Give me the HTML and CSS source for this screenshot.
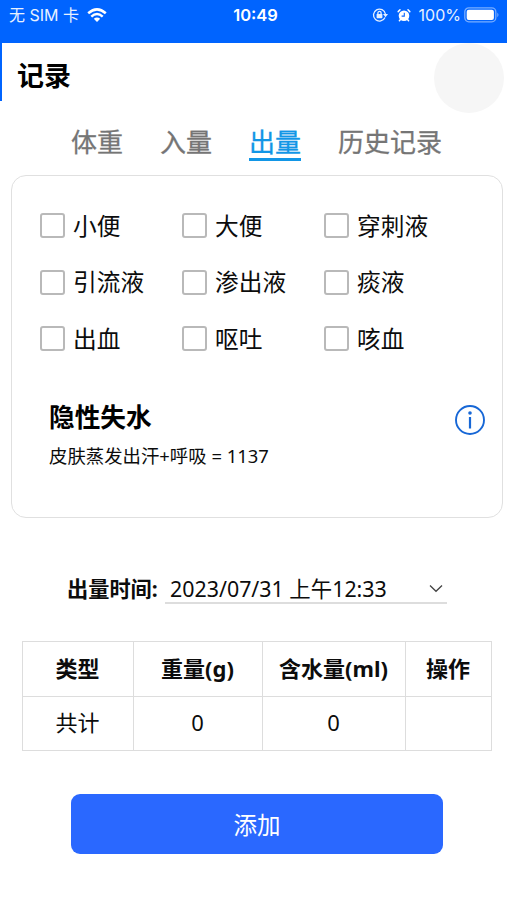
FILE: index.html
```html
<!DOCTYPE html>
<html lang="zh-CN">
<head>
<meta charset="utf-8">
<title>记录</title>
<link rel="stylesheet" href="styles.css">
</head>
<body>
<div class="status">
  <div class="carrier"><span>无 SIM 卡</span>
    <svg class="wifi" width="20" height="15" viewBox="0 0 20 15" fill="none" stroke="#fff" stroke-width="2.5"><path d="M1.2 5.3Q10-2.6 18.8 5.3M4.3 8.6Q10 3.5 15.7 8.6"/><path d="M10 14 6.8 10.8Q10 8 13.2 10.8Z" fill="#fff" stroke="none"/></svg>
  </div>
  <div class="clock">10:49</div>
  <div class="indicators">
    <svg width="16" height="16" viewBox="0 0 16 16" fill="none" stroke="#e4efff" stroke-width="1.3"><path d="M13 10.5A6 6 0 1 1 13.4 7"/><path d="M11 7h5l-2.5 3.2z" fill="#e4efff" stroke="none"/><path d="M5.9 7.6V6a1.6 1.6 0 0 1 3.2 0v1.6"/><rect x="4.6" y="7" width="5.8" height="4.2" rx=".6" fill="#e4efff" stroke="none"/></svg>
    <svg class="alarm" width="14" height="15" viewBox="0 0 14 15"><circle cx="7" cy="7.8" r="5.3" fill="#fff"/><path d="M3.5 11.5 2.4 12.8M10.5 11.5l1.1 1.3M1.2 3.6 3 1.8M12.8 3.6 11 1.8" stroke="#fff" stroke-width="1.5" stroke-linecap="round"/><path d="M7.3 4.7v3.4H4.6" fill="none" stroke="#0866ff" stroke-width="1.1"/></svg>
    <span class="percent">100%</span>
    <svg class="battery" width="36" height="16" viewBox="0 0 36 16"><rect x=".8" y=".8" width="31" height="14" rx="4" fill="none" stroke="#78adff" stroke-width="1.3"/><rect x="2.7" y="2.7" width="27.2" height="10.2" rx="2" fill="#fff"/><path d="M33.3 5.4q2.4 2.3 0 4.8z" fill="#78adff"/></svg>
  </div>
</div>
<header class="title-bar"><h1>记录</h1><span class="bubble"></span></header>
<nav class="tabs"><a>体重</a><a>入量</a><a class="active">出量</a><a>历史记录</a></nav>
<main>
  <section class="card">
    <div class="options">
      <label><i></i>小便</label><label><i></i>大便</label><label><i></i>穿刺液</label>
      <label><i></i>引流液</label><label><i></i>渗出液</label><label><i></i>痰液</label>
      <label><i></i>出血</label><label><i></i>呕吐</label><label><i></i>咳血</label>
    </div>
    <div class="loss">
      <div><h2>隐性失水</h2><p>皮肤蒸发出汗+呼吸 = 1137</p></div>
      <svg class="info" width="32" height="32" viewBox="0 0 32 32"><circle cx="16" cy="16" r="14" fill="none" stroke="#1767d6" stroke-width="1.9"/><circle cx="16" cy="9" r="1.8" fill="#1767d6"/><path d="M16 13v11.5" stroke="#1767d6" stroke-width="2.2"/></svg>
    </div>
  </section>
  <div class="time">
    <b>出量时间:</b>
    <div class="select"><span>2023/07/31 上午12:33</span><svg width="14" height="9" viewBox="0 0 14 9"><path d="M1 1.5 7 7.3l6-5.8" fill="none" stroke="#444" stroke-width="1.3"/></svg></div>
  </div>
  <table>
    <colgroup><col class="c1"><col class="c2"><col class="c3"><col class="c4"></colgroup>
    <tr><th>类型</th><th>重量(g)</th><th>含水量(ml)</th><th>操作</th></tr>
    <tr><td>共计</td><td>0</td><td>0</td><td></td></tr>
  </table>
  <button>添加</button>
</main>
</body>
</html>
```
FILE: styles.css
```css
* { box-sizing: border-box; }
body {
  margin: 0;
  background: #fff;
  color: #0c0c0c;
  font-family: "Noto Sans", "Noto Sans CJK SC", sans-serif;
}
h1, h2, p { margin: 0; }
svg { display: block; flex: none; }

.status {
  height: 43px;
  padding: 5px 7px 0 9px;
  background: #0064ff;
  color: #e8f1ff;
  display: grid;
  grid-template-columns: 1fr auto 1fr;
  align-items: start;
  font: 16px/20px Inter, "Noto Sans CJK SC", sans-serif;
}
.carrier, .indicators { display: flex; align-items: center; height: 20px; white-space: nowrap; }
.wifi { margin-left: 8px; }
.clock { font-weight: 600; font-size: 16.5px; color: #fff; padding-left: 2px; }
.indicators { justify-content: flex-end; }
.alarm { margin-left: 9px; }
.percent { margin-left: 8px; }
.battery { margin-left: 3px; }

.title-bar {
  height: 58px;
  border-left: 2px solid #0064ff;
  padding-left: 15px;
  display: flex;
  justify-content: space-between;
}
h1 { font-size: 27px; line-height: 66px; color: #000; }
.bubble {
  width: 70px;
  height: 70px;
  margin: 0 3px 0 0;
  border-radius: 50%;
  background: #f6f6f6;
  flex: none;
}

.tabs {
  display: flex;
  gap: 37px;
  padding: 22px 0 0 71px;
  height: 74px;
  font-size: 26px;
  line-height: 38px;
  color: #757575;
  -webkit-text-stroke: .3px currentColor;
}
.tabs a { height: 38px; }
.tabs .active { color: #1296e6; border-bottom: 3px solid #1296e6; }

main { display: flex; flex-direction: column; }
.card {
  width: 492px;
  height: 343px;
  margin-left: 11px;
  border: 1.5px solid #e0e0e0;
  border-radius: 15px;
  padding: 22px 16px 0 28px;
}
.options {
  display: grid;
  grid-template-columns: repeat(3, 142px);
  grid-auto-rows: 56.5px;
}
.options label {
  display: flex;
  align-items: center;
  height: 55px;
  font-size: 23.7px;
  line-height: 34px;
  white-space: nowrap;
}
.options i {
  width: 25px;
  height: 25px;
  margin: 0 8px 0 0;
  border: 2px solid #b9b9b9;
  border-radius: 3px;
  flex: none;
}
.loss { display: flex; justify-content: space-between; margin-top: 32px; padding-left: 9px; }
h2 { font-size: 25.7px; line-height: 36px; color: #000; }
.loss p { font-size: 18.4px; line-height: 26px; margin-top: 7px; }
.info { margin-top: 4px; }

.time {
  display: flex;
  margin: 54px 0 0 67px;
  height: 32px;
  font-size: 21.2px;
  line-height: 34px;
}
.select {
  width: 282px;
  margin-left: 7px;
  padding: 3px 4px 0 5px;
  border-bottom: 2px solid #ddd;
  display: flex;
  justify-content: space-between;
  align-items: center;
  font-size: 21.4px;
  white-space: nowrap;
}
.time b { width: 91px; white-space: nowrap; }

table {
  width: 469px;
  margin: 37px 0 0 22px;
  border-collapse: collapse;
  table-layout: fixed;
  font-size: 22px;
  line-height: 30px;
  text-align: center;
}
.c1 { width: 111px; }
.c2 { width: 129px; }
.c3 { width: 143px; }
.c4 { width: 86px; }
th, td { height: 54.5px; padding: 0 1px 2px 0; border: 1.5px solid #ddd; }

button {
  width: 372px;
  height: 60px;
  margin: 43px 0 0 71px;
  border: 0;
  border-radius: 9px;
  background: #2a68ff;
  color: #fff;
  font: 23.5px/34px "Noto Sans CJK SC", sans-serif;
}
```
